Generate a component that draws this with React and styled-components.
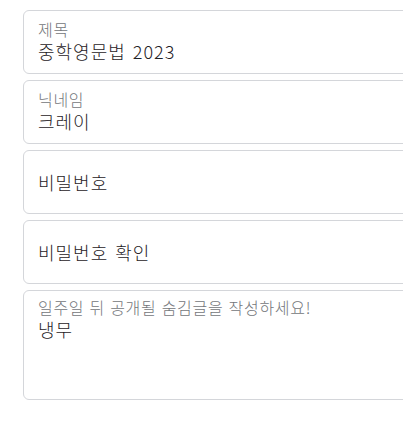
import styled, { createGlobalStyle } from 'styled-components'

const GlobalStyle = createGlobalStyle`
  html, body {
    margin: 0;
    padding: 0;
    background: #ffffff;
    overflow: hidden;
  }
  body {
    font-family: "Noto Sans CJK KR", "Noto Sans", sans-serif;
    color: #212529;
  }
`

const Form = styled.div`
  display: flex;
  flex-direction: column;
  gap: 6px;
  padding: 10px 0 0 23px;
  width: 430px;
`

const Field = styled.div`
  box-sizing: border-box;
  display: flex;
  flex-direction: column;
  justify-content: ${(p) => (p.$center ? 'center' : 'flex-start')};
  height: ${(p) => p.$height || 64}px;
  padding: ${(p) => (p.$center ? '0 14px' : `${p.$top || 8}px 14px 0`)};
  border: 1px solid #d4d6da;
  border-radius: 6px;
  background: #fff;
`

const Label = styled.div`
  font-size: 16px;
  font-weight: 300;
  line-height: 20px;
  letter-spacing: 0.7px;
  word-spacing: 1px;
  color: #73767a;
  white-space: nowrap;
`

const Value = styled.div`
  font-size: 18px;
  font-weight: 300;
  line-height: 24px;
  letter-spacing: 1px;
  word-spacing: 2px;
  color: #1f2226;
  white-space: nowrap;
`

export default function App() {
  return (
    <>
      <GlobalStyle />
      <Form>
        <Field>
          <Label>제목</Label>
          <Value>중학영문법 2023</Value>
        </Field>
        <Field>
          <Label>닉네임</Label>
          <Value>크레이</Value>
        </Field>
        <Field $center>
          <Value>비밀번호</Value>
        </Field>
        <Field $center>
          <Value>비밀번호 확인</Value>
        </Field>
        <Field $height={110} $top={6}>
          <Label>일주일 뒤 공개될 숨김글을 작성하세요!</Label>
          <Value>냉무</Value>
        </Field>
      </Form>
    </>
  )
}
